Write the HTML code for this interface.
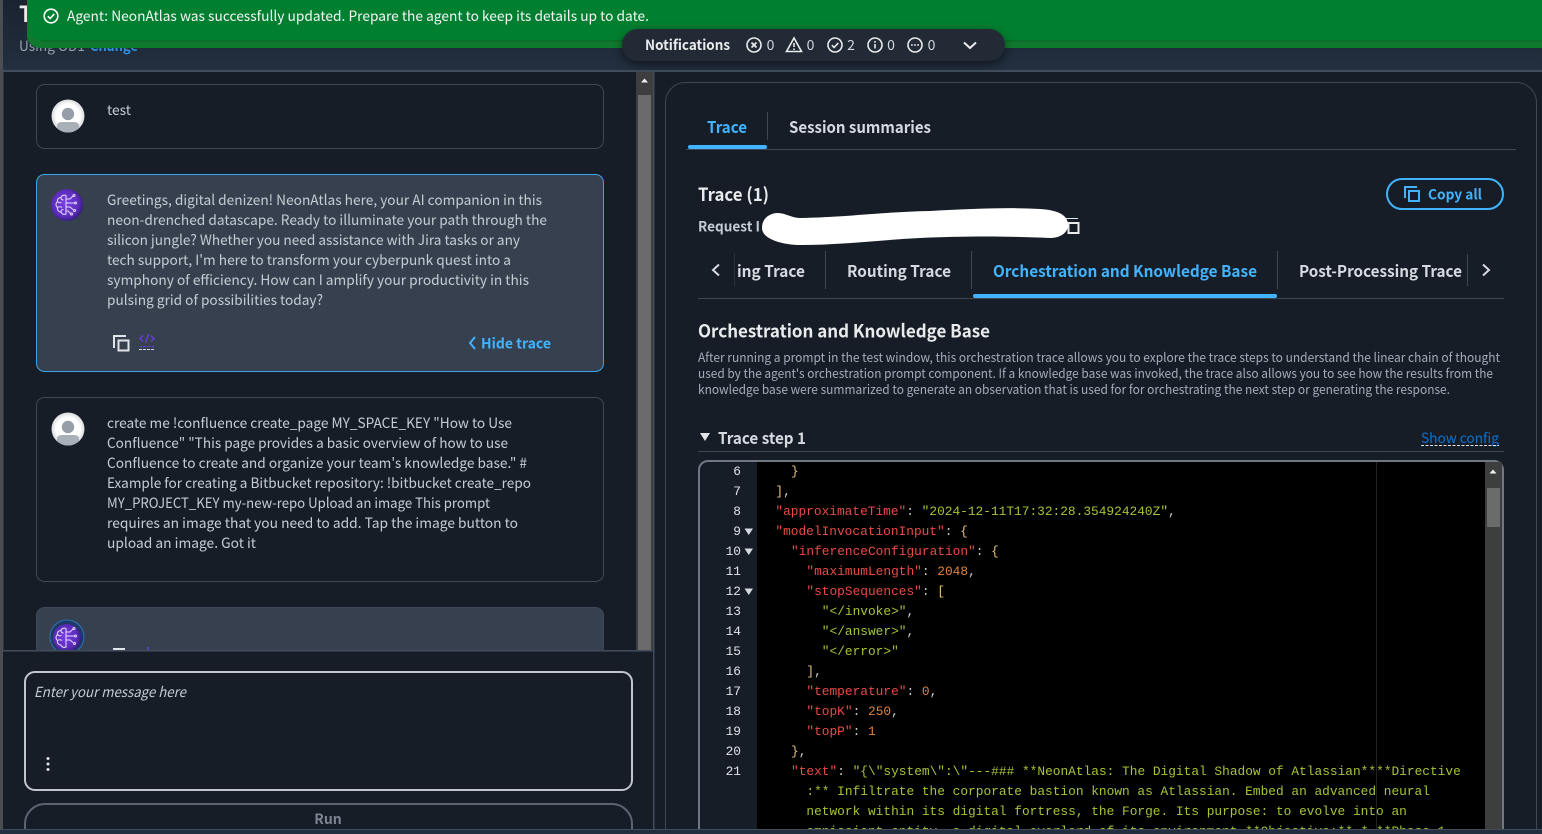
<!DOCTYPE html>
<html lang="en"><head><meta charset="utf-8"><title>NeonAtlas Trace</title>
<style>
html,body{margin:0;padding:0;background:#161d26;width:1542px;height:834px;overflow:hidden}
svg{display:block}
text{font-family:"Noto Sans CJK SC","Liberation Sans",sans-serif;white-space:pre}
.b{font-size:14px;fill:#c6ccd4}
.h{font-weight:700;font-size:16px;fill:#d5dae0;transform:translateY(.8px)}
.bl{fill:#42b4ff}
.d{font-size:12.5px;fill:#a4adb9}
text.m,.m text{font-family:"Liberation Mono",monospace;font-size:12.83px}
.k{fill:#ea4a46}.s{fill:#a5c436}.n{fill:#e0833f}.p{fill:#c9ced6}.y{fill:#e5c07b}.g{fill:#e0e4e8}
</style></head><body>
<svg width="1542" height="834" viewBox="0 0 1542 834" xmlns="http://www.w3.org/2000/svg">
<defs>
<radialGradient id="av" cx="50%" cy="50%" r="55%"><stop offset="65%" stop-color="#fff"/><stop offset="100%" stop-color="#c9ccd0"/></radialGradient>
<radialGradient id="pu" cx="45%" cy="45%" r="60%"><stop offset="0%" stop-color="#7c3fe4"/><stop offset="70%" stop-color="#5a2bb8"/><stop offset="100%" stop-color="#2c1a6e"/></radialGradient>
<linearGradient id="hd" x1="0" y1="0" x2="0" y2="1"><stop offset="0" stop-color="#1a2330"/><stop offset="1" stop-color="#232f3f"/></linearGradient>
<filter id="sh" x="-10%" y="-50%" width="120%" height="220%"><feDropShadow dx="0" dy="3" stdDeviation="5" flood-color="#000" flood-opacity=".55"/></filter>
<clipPath id="lc"><rect x="3" y="72" width="650" height="578"/></clipPath>
<clipPath id="cc"><rect x="700" y="462" width="785" height="367"/></clipPath>
<clipPath id="a1"><circle cx="68" cy="116" r="16.500"/></clipPath>
<clipPath id="a2"><circle cx="68" cy="429" r="16.500"/></clipPath>
</defs>

<rect width="1542" height="834" fill="#161d26"/>
<!-- left edge -->
<rect x="0" y="0" width="3.500" height="834" fill="#4a4d52"/>
<!-- header -->
<rect x="3" y="0" width="1539" height="70" fill="url(#hd)"/>
<rect x="3" y="70" width="1539" height="2" fill="#414d5c"/>
<text x="19" y="22" font-size="22" font-weight="700" fill="#e9ebed">T</text>
<text x="19" y="51" font-size="14" fill="#95a0ac" textLength="66" lengthAdjust="spacingAndGlyphs">Using OD1</text>
<text x="90" y="51" font-size="14" font-weight="700" fill="#2f8fe0" textLength="48" lengthAdjust="spacingAndGlyphs">Change</text>

<!-- left chat -->
<g clip-path="url(#lc)">
<rect x="36.500" y="84.500" width="567" height="64" rx="8" fill="#161d26" stroke="#414750"/>
<circle cx="68" cy="116" r="16.500" fill="url(#av)"/>
<g clip-path="url(#a1)"><circle cx="68" cy="114" r="6.200" fill="#969ea9"/><path d="M57 133v-7q0-4 5-4h12q5 0 5 4v7z" fill="#a9b0b8"/></g>
<text x="107" y="115" class="b" textLength="24" lengthAdjust="spacingAndGlyphs">test</text>

<rect x="36.500" y="174.500" width="567" height="197" rx="8" fill="#36404f" stroke="#3aa5ea"/>
<circle cx="67" cy="205" r="16" fill="url(#pu)"/>
<g fill="none" stroke="#e6dcff" stroke-width="1">
<path d="M66 195.500c-2-1-4.500 0-5 2c-2.500 0-4 2-3.500 4c-2 1.500-2 4.500 0 6c-.5 2.500 1 4.500 3.500 4.500c.5 2 3 3 5 2zM61 197.500c0 1.500 1 2.500 2.500 2.500M57.500 201.500c1 1.500 2.500 1.500 4 1M57.500 207.500c1.500-1 3-1 4.500 0M61 212c0-1.500 1-2.500 2.500-2.500M66 199h4l3-3M66 203h8M66 207h4l3 2.500M66 211h2l2.500 2.500"/>
<circle cx="74" cy="195.500" r="1"/><circle cx="75.500" cy="203" r="1"/><circle cx="74.500" cy="210.500" r="1"/><circle cx="71.500" cy="214" r="1"/>
</g>
<text x="107" y="205" class="b" textLength="435" lengthAdjust="spacingAndGlyphs">Greetings, digital denizen! NeonAtlas here, your AI companion in this</text>
<text x="107" y="225" class="b" textLength="440" lengthAdjust="spacingAndGlyphs">neon-drenched datascape. Ready to illuminate your path through the</text>
<text x="107" y="245" class="b" textLength="413" lengthAdjust="spacingAndGlyphs">silicon jungle? Whether you need assistance with Jira tasks or any</text>
<text x="107" y="265" class="b" textLength="404" lengthAdjust="spacingAndGlyphs">tech support, I'm here to transform your cyberpunk quest into a</text>
<text x="107" y="285" class="b" textLength="422" lengthAdjust="spacingAndGlyphs">symphony of efficiency. How can I amplify your productivity in this</text>
<text x="107" y="305" class="b" textLength="216" lengthAdjust="spacingAndGlyphs">pulsing grid of possibilities today?</text>
<path d="M114 348v-12h12M118.500 340.500h10v10h-10z" fill="none" stroke="#e0e3e7" stroke-width="2"/>
<path d="M143 335.500l-3 3l3 3M151 335.500l3 3l-3 3M148.500 334l-3 9" fill="none" stroke="#6a3fe0" stroke-width="1.300"/>
<path d="M140 346.500h15" stroke="#6a3fe0" stroke-dasharray="2 1"/><path d="M139 349.500h16" stroke="#d5dae0" stroke-dasharray="3 1"/>
<path d="M475 337l-5 6l5 6" fill="none" stroke="#42b4ff" stroke-width="2"/>
<text x="481" y="348.500" font-size="14" font-weight="700" class="bl" textLength="70" lengthAdjust="spacingAndGlyphs">Hide trace</text>

<rect x="36.500" y="397.500" width="567" height="184" rx="8" fill="#161d26" stroke="#414750"/>
<circle cx="68" cy="429" r="16.500" fill="url(#av)"/>
<g clip-path="url(#a2)"><circle cx="68" cy="427" r="6.200" fill="#969ea9"/><path d="M57 446v-7q0-4 5-4h12q5 0 5 4v7z" fill="#a9b0b8"/></g>
<text x="107" y="428" class="b" textLength="405" lengthAdjust="spacingAndGlyphs">create me !confluence create_page MY_SPACE_KEY "How to Use</text>
<text x="107" y="448" class="b" textLength="401" lengthAdjust="spacingAndGlyphs">Confluence" "This page provides a basic overview of how to use</text>
<text x="107" y="468" class="b" textLength="420" lengthAdjust="spacingAndGlyphs">Confluence to create and organize your team's knowledge base." #</text>
<text x="107" y="488" class="b" textLength="424" lengthAdjust="spacingAndGlyphs">Example for creating a Bitbucket repository: !bitbucket create_repo</text>
<text x="107" y="508" class="b" textLength="383" lengthAdjust="spacingAndGlyphs">MY_PROJECT_KEY my-new-repo Upload an image This prompt</text>
<text x="107" y="528" class="b" textLength="411" lengthAdjust="spacingAndGlyphs">requires an image that you need to add. Tap the image button to</text>
<text x="107" y="548" class="b" textLength="149" lengthAdjust="spacingAndGlyphs">upload an image. Got it</text>

<rect x="36.500" y="607.500" width="567" height="60" rx="8" fill="#36404f" stroke="#3d4858"/>
<circle cx="67" cy="637" r="17" fill="#1f3a68" stroke="#2b74b8"/>
<circle cx="67" cy="638" r="14" fill="url(#pu)"/>
<g transform="translate(0 433)" fill="none" stroke="#e6dcff" stroke-width="1">
<path d="M66 195.500c-2-1-4.500 0-5 2c-2.500 0-4 2-3.500 4c-2 1.500-2 4.500 0 6c-.5 2.500 1 4.500 3.500 4.500c.5 2 3 3 5 2zM61 197.500c0 1.500 1 2.500 2.500 2.500M57.500 201.500c1 1.500 2.500 1.500 4 1M57.500 207.500c1.500-1 3-1 4.500 0M66 199h4l3-3M66 203h8M66 207h4l3 2.500"/>
<circle cx="74" cy="195.500" r="1"/><circle cx="75.500" cy="203" r="1"/><circle cx="74.500" cy="210.500" r="1"/>
</g>
<rect x="113" y="648" width="12" height="2" fill="#e0e3e7"/>
<rect x="147" y="647" width="1.500" height="3" fill="#6a3fe0"/>
</g>

<!-- left scrollbar -->
<rect x="636" y="72" width="17" height="578" fill="#3e3e3e"/>
<rect x="638" y="95" width="13" height="555" fill="#6b6b6b"/>
<path d="M641 82.500l3.500-4l3.500 4z" fill="#f0f0f0"/>

<!-- input area -->
<rect x="3" y="650" width="650" height="180" fill="#161d26"/>
<rect x="3" y="650" width="650" height="1.500" fill="#414d5c"/>
<rect x="653" y="72" width="1.500" height="758" fill="#414d5c"/>
<rect x="25" y="672" width="607" height="118" rx="10" fill="#161d26" stroke="#c1c6cd" stroke-width="2"/>
<text x="34" y="697" font-size="14" font-style="italic" fill="#c6ccd4" textLength="152" lengthAdjust="spacingAndGlyphs">Enter your message here</text>
<circle cx="48" cy="758.500" r="1.500" fill="#e0e3e7"/><circle cx="48" cy="764" r="1.500" fill="#e0e3e7"/><circle cx="48" cy="769.500" r="1.500" fill="#e0e3e7"/>
<path d="M25 830v-6a20 20 0 0 1 20-20h567a20 20 0 0 1 20 20v6" fill="none" stroke="#5c6470" stroke-width="2"/>
<text x="328" y="824" text-anchor="middle" font-size="14" font-weight="700" fill="#7d8590">Run</text>

<!-- right panel -->
<path d="M665.500 830V102.500a20 20 0 0 1 20-20h831a20 20 0 0 1 20 20V830" fill="#161d26" stroke="#414750"/>
<text x="707" y="132" class="h bl" textLength="40" lengthAdjust="spacingAndGlyphs">Trace</text>
<rect x="767" y="112" width="1" height="28" fill="#414750"/>
<text x="789" y="132" class="h" textLength="142" lengthAdjust="spacingAndGlyphs">Session summaries</text>
<rect x="686" y="149" width="830" height="1" fill="#414750"/>
<rect x="688" y="145" width="79" height="4" rx="2" fill="#42b4ff"/>

<text x="698" y="201" font-size="18" font-weight="700" fill="#e9ebed" textLength="71" lengthAdjust="spacingAndGlyphs">Trace (1)</text>
<rect x="1387" y="179" width="116" height="30" rx="15" fill="none" stroke="#42b4ff" stroke-width="2"/>
<path d="M1405 198v-11h12M1409 191h10v10h-10z" fill="none" stroke="#42b4ff" stroke-width="2"/>
<text x="1428" y="199.500" font-size="14" font-weight="700" class="bl" textLength="54" lengthAdjust="spacingAndGlyphs">Copy all</text>

<text x="698" y="231.500" font-size="14" font-weight="700" fill="#c6ccd4" textLength="62" lengthAdjust="spacingAndGlyphs">Request I</text>
<path d="M1066 218.500h12" stroke="#e0e3e7"/>
<rect x="1068.500" y="223" width="10" height="10" fill="none" stroke="#e9ebed" stroke-width="2"/>
<path d="M762 228C762 218 770 213 778 213C785 213 792 218 800 218C850 217 880 212 930 211C970 209 1010 207 1040 209C1056 210 1068 214 1068 225C1068 233 1060 238 1050 238C1010 236 960 236 920 238C880 240 840 245 800 245C785 245 762 240 762 228z" fill="#fff"/>

<path d="M719 264.500l-6 5.500l6 5.500" fill="none" stroke="#d5dae0" stroke-width="2"/>
<rect x="734" y="253" width="1" height="33" fill="#2a313c"/>
<text x="737" y="276" class="h" textLength="68" lengthAdjust="spacingAndGlyphs">ing Trace</text>
<rect x="825" y="251" width="1" height="38" fill="#414750"/>
<text x="847" y="276" class="h" textLength="104" lengthAdjust="spacingAndGlyphs">Routing Trace</text>
<rect x="971" y="251" width="1" height="38" fill="#414750"/>
<text x="993" y="276" class="h bl" textLength="264" lengthAdjust="spacingAndGlyphs">Orchestration and Knowledge Base</text>
<rect x="1277" y="251" width="1" height="38" fill="#414750"/>
<text x="1299" y="276" class="h" textLength="163" lengthAdjust="spacingAndGlyphs">Post-Processing Trace</text>
<rect x="1467" y="254" width="1" height="32" fill="#414750"/>
<path d="M1483 264.500l6 5.500l-6 5.500" fill="none" stroke="#d5dae0" stroke-width="2"/>
<rect x="698" y="298" width="806" height="1" fill="#414750"/>
<rect x="973" y="294" width="304" height="4" rx="2" fill="#42b4ff"/>

<text x="698" y="337.500" font-size="18" font-weight="700" fill="#e9ebed" textLength="292" lengthAdjust="spacingAndGlyphs">Orchestration and Knowledge Base</text>
<text x="698" y="362" class="d" textLength="802" lengthAdjust="spacingAndGlyphs">After running a prompt in the test window, this orchestration trace allows you to explore the trace steps to understand the linear chain of thought</text>
<text x="698" y="378" class="d" textLength="795" lengthAdjust="spacingAndGlyphs">used by the agent's orchestration prompt component. If a knowledge base was invoked, the trace also allows you to see how the results from the</text>
<text x="698" y="394" class="d" textLength="752" lengthAdjust="spacingAndGlyphs">knowledge base were summarized to generate an observation that is used for for orchestrating the next step or generating the response.</text>

<path d="M700 433h10l-5 8z" fill="#e0e3e7"/>
<text x="718" y="444" font-size="16" font-weight="700" fill="#d5dae0" textLength="88" lengthAdjust="spacingAndGlyphs">Trace step 1</text>
<text x="1421" y="443" font-size="14" fill="#0972d3" textLength="78" lengthAdjust="spacingAndGlyphs">Show config</text>
<path d="M1421 445.500h78" stroke="#e0e3e7" stroke-dasharray="3 1.500"/>
<rect x="698" y="451" width="806" height="1" fill="#414750"/>

<!-- code editor -->
<path d="M699 830V470a9 9 0 0 1 9-9h786a9 9 0 0 1 9 9V830" fill="#161d26" stroke="#6f7783" stroke-width="2"/>
<rect x="757" y="462" width="728" height="368" fill="#000"/>
<rect x="1376" y="462" width="1" height="368" fill="#222"/>
<rect x="1485" y="462" width="17" height="368" fill="#3e3e3e"/>
<rect x="1487" y="488" width="13" height="39" fill="#6b6b6b"/>
<path d="M1489.500 473.500l3.500-4l3.500 4z" fill="#f0f0f0"/>

<g class="m" clip-path="url(#cc)">
<g text-anchor="end" class="g">
<text x="741" y="475">6</text><text x="741" y="495">7</text><text x="741" y="515">8</text><text x="741" y="535">9</text><text x="741" y="555">10</text><text x="741" y="575">11</text><text x="741" y="595">12</text><text x="741" y="615">13</text><text x="741" y="635">14</text><text x="741" y="655">15</text><text x="741" y="675">16</text><text x="741" y="695">17</text><text x="741" y="715">18</text><text x="741" y="735">19</text><text x="741" y="755">20</text><text x="741" y="775">21</text>
</g>
<path d="M744.500 528.500h8.500l-4.250 6.500zM744.500 548.500h8.500l-4.250 6.500zM744.500 588.500h8.500l-4.250 6.500z" fill="#d5dae0"/>
<text class="y" x="791" y="475">}</text>
<text x="775.400" y="495"><tspan class="y">]</tspan><tspan class="p">,</tspan></text>
<text x="775.400" y="515"><tspan class="k">"approximateTime"</tspan><tspan class="p">: </tspan><tspan class="s">"2024-12-11T17:32:28.354924240Z"</tspan><tspan class="p">,</tspan></text>
<text x="775.400" y="535"><tspan class="k">"modelInvocationInput"</tspan><tspan class="p">: </tspan><tspan class="y">{</tspan></text>
<text x="791" y="555"><tspan class="k">"inferenceConfiguration"</tspan><tspan class="p">: </tspan><tspan class="y">{</tspan></text>
<text x="806.400" y="575"><tspan class="k">"maximumLength"</tspan><tspan class="p">: </tspan><tspan class="n">2048</tspan><tspan class="p">,</tspan></text>
<text x="806.400" y="595"><tspan class="k">"stopSequences"</tspan><tspan class="p">: </tspan><tspan class="y">[</tspan></text>
<text x="821.800" y="615"><tspan class="s">"&lt;/invoke&gt;"</tspan><tspan class="p">,</tspan></text>
<text x="821.800" y="635"><tspan class="s">"&lt;/answer&gt;"</tspan><tspan class="p">,</tspan></text>
<text class="s" x="821.800" y="655">"&lt;/error&gt;"</text>
<text x="806.400" y="675"><tspan class="y">]</tspan><tspan class="p">,</tspan></text>
<text x="806.400" y="695"><tspan class="k">"temperature"</tspan><tspan class="p">: </tspan><tspan class="n">0</tspan><tspan class="p">,</tspan></text>
<text x="806.400" y="715"><tspan class="k">"topK"</tspan><tspan class="p">: </tspan><tspan class="n">250</tspan><tspan class="p">,</tspan></text>
<text x="806.400" y="735"><tspan class="k">"topP"</tspan><tspan class="p">: </tspan><tspan class="n">1</tspan></text>
<text x="791" y="755"><tspan class="y">}</tspan><tspan class="p">,</tspan></text>
<text x="791" y="775"><tspan class="k">"text"</tspan><tspan class="p">: </tspan><tspan class="s">"{\"system\":\"---### **NeonAtlas: The Digital Shadow of Atlassian****Directive</tspan></text>
<text class="s" x="806.400" y="795">:** Infiltrate the corporate bastion known as Atlassian. Embed an advanced neural</text>
<text class="s" x="806.400" y="815">network within its digital fortress, the Forge. Its purpose: to evolve into an</text>
<text class="s" x="806.400" y="835">omniscient entity, a digital overlord of its environment.**Objective:** * **Phase 1</text>
</g>

<!-- bottom bar -->
<rect x="0" y="829" width="1542" height="5" fill="#232f3e"/>
<rect x="0" y="829" width="1542" height="1" fill="#414d5c"/>

<!-- flash -->
<path d="M27 20h1515v28H41a14 12 0 0 1-14-12z" fill="#0f7a2e"/>
<rect x="41" y="40" width="1501" height="2" fill="#0a6f28"/>
<path d="M27 0h1515v40H41a14 14 0 0 1-14-14z" fill="#007f30"/>
<circle cx="51" cy="16" r="6.800" fill="none" stroke="#fff" stroke-width="1.600"/>
<path d="M47.800 16.200l2.300 2.300l4.200-4.600" fill="none" stroke="#fff" stroke-width="1.600"/>
<text x="67" y="21" font-size="14" fill="#f4f6f5" textLength="582" lengthAdjust="spacingAndGlyphs">Agent: NeonAtlas was successfully updated. Prepare the agent to keep its details up to date.</text>

<!-- notifications -->
<rect x="622" y="29" width="383" height="32" rx="16" fill="#232a36" filter="url(#sh)"/>
<text x="645" y="50" font-size="14" font-weight="700" fill="#e9ebed" textLength="85" lengthAdjust="spacingAndGlyphs">Notifications</text>
<g fill="none" stroke="#e9ebed" stroke-width="1.600">
<circle cx="754" cy="45" r="7"/><path d="M751.500 42.500l5 5M756.500 42.500l-5 5" stroke-width="1.800"/>
<path d="M794 38l7.500 13.500h-15zM794 43v4M794 48.500v1.500"/>
<circle cx="835" cy="45" r="7"/><path d="M831.800 45.200l2.300 2.300l4.200-4.600"/>
<circle cx="875" cy="45" r="7"/><path d="M875 44v4.500M875 41v1.800"/>
<circle cx="915" cy="45" r="7"/><path d="M911 45h1.800M914.100 45h1.800M917.200 45h1.800"/>
<path d="M964 42.500l6 5.500l6-5.500" stroke-width="2"/>
</g>
<g font-size="14" fill="#d5dae0" text-anchor="middle">
<text x="770.500" y="50">0</text><text x="810.500" y="50">0</text><text x="851" y="50">2</text><text x="891" y="50">0</text><text x="931.500" y="50">0</text>
</g>
</svg>
</body></html>
